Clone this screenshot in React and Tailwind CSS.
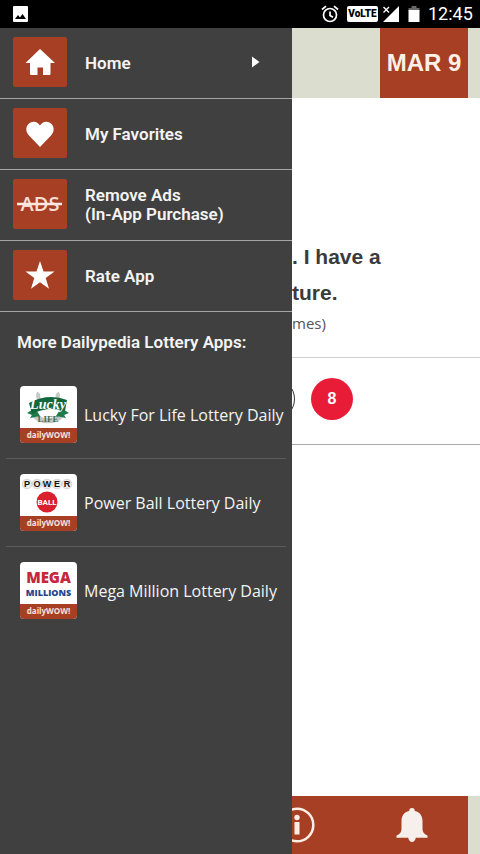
import React from "react";

const HomeIcon = () => (
    <svg className="w-8 h-8" viewBox="0 0 32 32" fill="#fff" aria-hidden="true">
        <path d="M16 3 L31 17 H26.500 V28 Q26.500 29 25.500 29 H19 V21.500 H13.500 V29 H7 Q6 29 6 28 V17 H1.500 Z" />
    </svg>
);

const HeartIcon = () => (
    <svg className="w-8 h-8" viewBox="0 0 32 32" fill="#fff" aria-hidden="true">
        <path d="M16 30 L5 18.500 C1.500 14.500 1.500 10 4.500 7 C8 3.500 13.500 4 16 8.500 C18.500 4 24 3.500 27.500 7 C30.500 10 30.500 14.500 27 18.500 Z" />
    </svg>
);

const StarIcon = () => (
    <svg className="w-8 h-8" viewBox="0 0 32 32" fill="#fff" aria-hidden="true">
        <path d="M16 2 L19.500 12.500 H30.500 L21.700 19 L25 29.800 L16 23.200 L7 29.800 L10.300 19 L1.500 12.500 H12.500 Z" />
    </svg>
);

const AdsIcon = () => (
    <svg className="h-8 w-12" viewBox="0 0 48 32" aria-hidden="true">
        <text x="24" y="23" textAnchor="middle" fontFamily="Open Sans, sans-serif" fontSize="20" fontWeight="600" fill="#f7ddd4">ADS</text>
        <path d="M1 16 H46" stroke="#fbe9e2" strokeWidth="2.500" />
    </svg>
);

const StatusBar = () => (
    <header className="flex h-7 shrink-0 items-center bg-black pl-3 pr-2 text-white">
        <svg className="w-4 h-4" viewBox="0 0 16 16" aria-label="Screenshot saved">
            <rect x="1" y="0" width="15" height="16" rx="1" fill="#fff" />
            <path d="M3 13 L6 9 L8 11.500 L10.500 8 L14 13 Z" fill="#000" />
        </svg>
        <div className="ml-auto flex items-center">
            <svg className="w-[18px] h-[18px]" viewBox="0 0 18 18" fill="none" stroke="#fff" strokeWidth="1.700" aria-label="Alarm">
                <circle cx="9" cy="10" r="6.500" />
                <path d="M9 6.500 V10.500 L12 12.300 M1 4.500 L5 1.200 M17 4.500 L13 1.200" />
            </svg>
            <span className="ml-2 flex h-4 w-[31px] items-center justify-center rounded-xs bg-white font-['Roboto'] text-[10px] leading-4 font-black text-black">
                VoLTE
            </span>
            <svg className="ml-1 h-[18px] w-[18px]" viewBox="0 0 18 18" aria-label="Signal">
                <path d="M17 1 V17 H1 Z" fill="#fff" />
                <path d="M1.500 2 L7 7.500 M7 2 L1.500 7.500" stroke="#fff" strokeWidth="1.400" />
            </svg>
            <svg className="ml-2 h-[18px] w-3" viewBox="0 0 12 18" aria-label="Battery">
                <path d="M3.500 1 H8.500 V3 H11.500 V6 H0.500 V3 H3.500 Z" fill="#666" />
                <rect x="0.500" y="5" width="11" height="12" fill="#fff" />
            </svg>
            <span className="ml-2 w-11 whitespace-nowrap font-['Roboto'] text-lg leading-7">12:45</span>
        </div>
    </header>
);

const MenuItem = ({ icon, children, arrow }) => (
    <li className="border-b border-[#a5a5a5]">
        <button type="button" className="flex w-full items-center pt-[9px] pb-[11px] pl-[13px] text-left">
            <span className="flex h-[50px] w-[54px] shrink-0 items-center justify-center rounded-xs bg-[#a63f24]">
                {icon}
            </span>
            <span className="ml-[18px] flex-1 pt-[2px] text-[17px] leading-[19px] font-semibold">{children}</span>
            {arrow && (
                <svg className="mr-8 h-3 w-2" viewBox="0 0 8 12" fill="#fff" aria-hidden="true">
                    <path d="M0 0.500 L7.500 6 L0 11.500 Z" />
                </svg>
            )}
        </button>
    </li>
);

const LuckyLogo = () => (
    <svg className="h-[42px] w-14" viewBox="0 0 56 42" aria-label="Lucky for Life">
        <path d="M19 7 C16 10 21 13 18 18 M37 7 C40 10 35 13 38 18" fill="none" stroke="#c4c9c5" strokeWidth="4" />
        <path d="M12 25 C16 38 40 38 44 25" fill="none" stroke="#c4c9c5" strokeWidth="5" />
        <path d="M7 27 L15 22 L20 30 L10 32 L12 29 Z M49 27 L41 22 L36 30 L46 32 L44 29 Z" fill="#1f7a4a" />
        <path d="M9 17 Q28 7 47 14 L45 25 Q28 20 12 28 Z" fill="#12683e" />
        <text x="28" y="23" textAnchor="middle" fontFamily="Liberation Serif, serif" fontSize="14" fontWeight="700" fontStyle="italic" fill="#fff">Lucky</text>
        <text x="28" y="36" textAnchor="middle" fontFamily="Liberation Serif, serif" fontSize="9" fontWeight="700" fill="#3f7058">LIFE</text>
    </svg>
);

const PowerLogo = () => (
    <svg className="h-[42px] w-14" viewBox="0 0 56 42" aria-label="Power Ball">
        {["P", "O", "W", "E", "R"].map((letter, i) => (
            <g key={letter}>
                <circle cx={7 + i * 10} cy="10" r="4.800" fill="#ececec" stroke="#c9c9c9" strokeWidth="0.700" />
                <text x={7 + i * 10} y="13" textAnchor="middle" fontFamily="Liberation Sans, sans-serif" fontSize="9" fontWeight="700" fill="#111">
                    {letter}
                </text>
            </g>
        ))}
        <circle cx="27" cy="28" r="10.500" fill="#d8202f" />
        <text x="27" y="31" textAnchor="middle" fontFamily="Roboto, sans-serif" fontSize="8" fontWeight="700" fill="#fff">BALL</text>
    </svg>
);

const MegaLogo = () => (
    <span className="flex h-[42px] flex-col items-center justify-center font-['Open_Sans',sans-serif] font-extrabold">
        <span className="text-[15px] leading-5 text-[#c5283d]">MEGA</span>
        <span className="text-[9px] leading-3 text-[#1f4789]">MILLIONS</span>
    </span>
);

const apps = [
    { name: "Lucky For Life Lottery Daily", logo: <LuckyLogo /> },
    { name: "Power Ball Lottery Daily", logo: <PowerLogo /> },
    { name: "Mega Million Lottery Daily", logo: <MegaLogo /> },
];

const Drawer = () => (
    <nav className="w-[292px] shrink-0 bg-[#404040] font-['Roboto',sans-serif] text-[#f4f4f4]">
        <ul>
            <MenuItem icon={<HomeIcon />} arrow>Home</MenuItem>
            <MenuItem icon={<HeartIcon />}>My Favorites</MenuItem>
            <MenuItem icon={<AdsIcon />}>
                Remove Ads
                <br />
                (In-App Purchase)
            </MenuItem>
            <MenuItem icon={<StarIcon />}>Rate App</MenuItem>
        </ul>
        <h2 className="pt-[18px] pb-4 pl-[17px] text-[17px] leading-[25px] font-semibold">More Dailypedia Lottery Apps:</h2>
        <ul className="px-[6px]">
            {apps.map((app) => (
                <li key={app.name} className="border-b border-[#5c5c5c] last:border-0">
                    <a href="#" className="flex h-[87px] items-center pl-[14px]">
                        <span className="w-[57px] shrink-0 overflow-hidden rounded-sm bg-white">
                            {app.logo}
                            <span className="block h-[15px] bg-[#a63f24] text-center font-['Open_Sans',sans-serif] text-[8px] leading-[14px] font-bold text-[#f8e3dc]">
                                dailyWOW!
                            </span>
                        </span>
                        <span className="ml-[7px] whitespace-nowrap font-['Open_Sans',sans-serif] text-base">{app.name}</span>
                    </a>
                </li>
            ))}
        </ul>
    </nav>
);

const DailyPage = () => (
    <main className="flex min-w-0 flex-1 flex-col overflow-hidden bg-white text-[#3b3b3b]">
        <div className="flex h-[70px] justify-end bg-[#dbddcf] pr-3">
            <h1 className="flex w-[88px] items-center justify-center bg-[#a63f24] font-['Liberation_Sans',sans-serif] text-2xl font-bold whitespace-nowrap text-[#fdf0e6]">
                MAR 9
            </h1>
        </div>
        <section className="border-b border-[#cfcfcf] pt-[141px] pb-[22px]">
            <p className="font-['Liberation_Sans',sans-serif] text-[21px] leading-9 font-bold">
                . I have a
                <br />
                ture.
            </p>
            <p className="font-['Open_Sans',sans-serif] text-[15px] leading-6 text-[#555]">mes)</p>
        </section>
        <section className="flex h-[87px] items-center gap-4 border-b border-[#a8a8a8] pb-1">
            <span className="-ml-[39px] h-[42px] w-[42px] rounded-full border border-[#333]"></span>
            <span className="flex h-[42px] w-[42px] items-center justify-center rounded-full bg-[#e81c37] font-['Liberation_Sans',sans-serif] text-base font-bold text-white">
                8
            </span>
        </section>
        <footer className="mt-auto bg-[#dbddcf] pr-3">
            <div className="flex h-[58px] items-center justify-between bg-[#a63f24] pr-10">
                <button type="button" aria-label="Info" className="-ml-3">
                    <svg className="h-9 w-9" viewBox="0 0 36 36" aria-hidden="true">
                        <circle cx="17" cy="18" r="16.300" fill="none" stroke="#fdeee6" strokeWidth="2.500" />
                        <circle cx="17" cy="10.500" r="2.700" fill="#fdeee6" />
                        <path d="M14.500 15 H19.500 V27.500 H14.500 Z" fill="#fdeee6" />
                    </svg>
                </button>
                <button type="button" aria-label="Notifications">
                    <svg className="h-9 w-8" viewBox="0 0 32 36" fill="#f6efec" aria-hidden="true">
                        <path d="M16 1 C17.800 1 18.800 2.200 18.800 4 C24 5 26.500 9 26.500 14 V22 C26.500 25 28 27 31 28.300 Q32 29 31.500 30.800 H19.800 C19.300 33.500 18 35 16 35 C14 35 12.700 33.500 12.200 30.800 H0.500 Q0 29 1 28.300 C4 27 5.500 25 5.500 22 V14 C5.500 9 8 5 13.200 4 C13.200 2.200 14.200 1 16 1 Z" />
                    </svg>
                </button>
            </div>
        </footer>
    </main>
);

const App = () => (
    <div className="flex min-h-screen flex-col">
        <StatusBar />
        <div className="flex flex-1">
            <Drawer />
            <DailyPage />
        </div>
    </div>
);

export default App;
